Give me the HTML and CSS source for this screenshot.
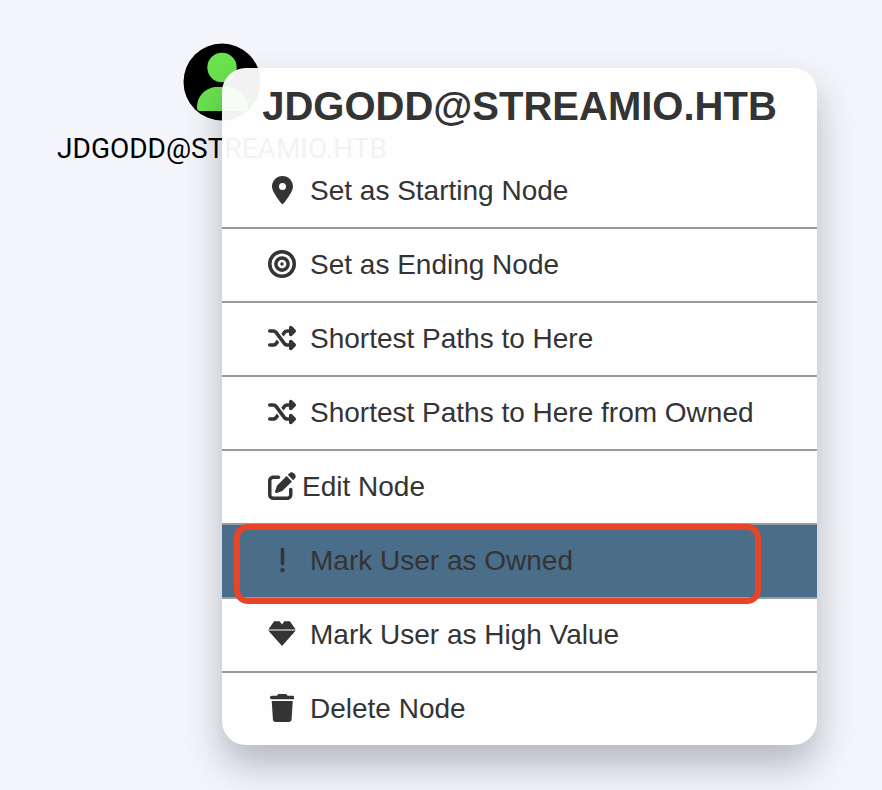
FILE: index.html
```html
<!DOCTYPE html>
<html lang="en">

<head>
    <meta charset="UTF-8">
    <meta name="viewport" content="width=device-width, initial-scale=1.0">
    <title>Node menu</title>
    <link rel="stylesheet" href="styles.css">
</head>

<body>
    <div class="node">
        <svg class="node-icon" viewBox="0 0 78 78">
            <circle cx="39" cy="39" r="38.5" fill="#000" />
            <circle cx="39" cy="24.5" r="14.7" fill="#6ae34f" />
            <path d="M14 64c0-12 10-20 20-20h10c11 0 21 8 21 20v1c0 2-1 3-3 3H17c-2 0-3-1-3-3z" fill="#6ae34f" />
        </svg>
        <div class="node-label">JDGODD@STREAMIO.HTB</div>
    </div>

    <div class="menu">
        <div class="menu-title">JDGODD@STREAMIO.HTB</div>
        <ul class="menu-list">
            <li class="menu-item">
                <span class="icon"><svg viewBox="0 0 384 512"><path d="M215.7 499.2C267 435 384 279.4 384 192C384 86 298 0 192 0S0 86 0 192c0 87.4 117 243 168.3 307.2c12.3 15.3 35.1 15.3 47.4 0zM192 128a64 64 0 1 1 0 128 64 64 0 1 1 0-128z" /></svg></span>
                Set as Starting Node
            </li>
            <li class="menu-item">
                <span class="icon"><svg viewBox="0 0 512 512"><path d="M448 256A192 192 0 1 0 64 256a192 192 0 1 0 384 0zM0 256a256 256 0 1 1 512 0A256 256 0 1 1 0 256zm256 80a80 80 0 1 0 0-160 80 80 0 1 0 0 160zm0-224a144 144 0 1 1 0 288 144 144 0 1 1 0-288zM224 256a32 32 0 1 1 64 0 32 32 0 1 1 -64 0z" /></svg></span>
                Set as Ending Node
            </li>
            <li class="menu-item">
                <span class="icon"><svg viewBox="0 0 512 512"><path d="M403.8 34.4c12-5 25.7-2.2 34.9 6.9l64 64c6 6 9.4 14.1 9.4 22.6s-3.4 16.6-9.4 22.6l-64 64c-9.2 9.2-22.9 11.9-34.9 6.9s-19.8-16.6-19.8-29.6V160H352c-10.1 0-19.6 4.7-25.6 12.8L284 229.3 244 176l31.2-41.6C293.3 110.2 321.8 96 352 96h32V64c0-12.9 7.8-24.6 19.8-29.6zM164 282.7L204 336l-31.2 41.6C154.7 401.8 126.2 416 96 416H32c-17.7 0-32-14.3-32-32s14.3-32 32-32H96c10.1 0 19.6-4.7 25.6-12.8L164 282.7zm274.6 188c-9.2 9.2-22.9 11.9-34.9 6.9s-19.8-16.6-19.8-29.6V416H352c-30.2 0-58.7-14.2-76.8-38.4L121.6 172.8c-6-8.1-15.5-12.8-25.6-12.8H32c-17.7 0-32-14.3-32-32s14.3-32 32-32H96c30.2 0 58.7 14.2 76.8 38.4L326.4 339.2c6 8.1 15.5 12.8 25.6 12.8h32V320c0-12.9 7.8-24.6 19.8-29.6s25.7-2.2 34.9 6.9l64 64c6 6 9.4 14.1 9.4 22.6s-3.4 16.6-9.4 22.6l-64 64z" /></svg></span>
                Shortest Paths to Here
            </li>
            <li class="menu-item">
                <span class="icon"><svg viewBox="0 0 512 512"><path d="M403.8 34.4c12-5 25.7-2.2 34.9 6.9l64 64c6 6 9.4 14.1 9.4 22.6s-3.4 16.6-9.4 22.6l-64 64c-9.2 9.2-22.9 11.9-34.9 6.9s-19.8-16.6-19.8-29.6V160H352c-10.1 0-19.6 4.7-25.6 12.8L284 229.3 244 176l31.2-41.6C293.3 110.2 321.8 96 352 96h32V64c0-12.9 7.8-24.6 19.8-29.6zM164 282.7L204 336l-31.2 41.6C154.7 401.8 126.2 416 96 416H32c-17.7 0-32-14.3-32-32s14.3-32 32-32H96c10.1 0 19.6-4.7 25.6-12.8L164 282.7zm274.6 188c-9.2 9.2-22.9 11.9-34.9 6.9s-19.8-16.6-19.8-29.6V416H352c-30.2 0-58.7-14.2-76.8-38.4L121.6 172.8c-6-8.1-15.5-12.8-25.6-12.8H32c-17.7 0-32-14.3-32-32s14.3-32 32-32H96c30.2 0 58.7 14.2 76.8 38.4L326.4 339.2c6 8.1 15.5 12.8 25.6 12.8h32V320c0-12.9 7.8-24.6 19.8-29.6s25.7-2.2 34.9 6.9l64 64c6 6 9.4 14.1 9.4 22.6s-3.4 16.6-9.4 22.6l-64 64z" /></svg></span>
                Shortest Paths to Here from Owned
            </li>
            <li class="menu-item">
                <span class="icon icon-edit"><svg viewBox="0 0 512 512"><path d="M471.6 21.7c-21.9-21.9-57.3-21.9-79.2 0L362.3 51.7l97.9 97.9 30.1-30.1c21.9-21.9 21.9-57.3 0-79.2L471.6 21.7zm-299.2 220c-6.1 6.1-10.8 13.6-13.5 21.9l-29.6 88.8c-2.9 8.6-.6 18.1 5.8 24.6s15.9 8.7 24.6 5.8l88.8-29.6c8.2-2.7 15.7-7.4 21.9-13.5L437.7 172.3 339.7 74.3 172.4 241.7zM96 64C43 64 0 107 0 160V416c0 53 43 96 96 96H352c53 0 96-43 96-96V320c0-17.7-14.3-32-32-32s-32 14.3-32 32v96c0 17.7-14.3 32-32 32H96c-17.7 0-32-14.3-32-32V160c0-17.7 14.3-32 32-32h96c17.7 0 32-14.3 32-32s-14.3-32-32-32H96z" /></svg></span>
                Edit Node
            </li>
            <li class="menu-item menu-item-active">
                <span class="icon"><svg viewBox="0 0 128 512"><path d="M96 64c0-17.7-14.3-32-32-32S32 46.3 32 64V320c0 17.7 14.3 32 32 32s32-14.3 32-32V64zM64 480a40 40 0 1 0 0-80 40 40 0 1 0 0 80z" /></svg></span>
                Mark User as Owned
            </li>
            <li class="menu-item">
                <span class="icon"><svg viewBox="0 0 512 512"><path d="M112 24h100l44 58 44-58h100l106 150H6zM4 192h504L256 476z" /></svg></span>
                Mark User as High Value
            </li>
            <li class="menu-item">
                <span class="icon"><svg viewBox="0 0 448 512"><path d="M135.2 17.7L128 32H32C14.3 32 0 46.3 0 64S14.3 96 32 96H416c17.7 0 32-14.3 32-32s-14.3-32-32-32H320l-7.2-14.3C307.4 6.8 296.3 0 284.2 0H163.8c-12.1 0-23.2 6.8-28.6 17.7zM416 128H32L53.2 467c1.6 25.3 22.6 45 47.9 45H346.9c25.3 0 46.3-19.7 47.9-45L416 128z" /></svg></span>
                Delete Node
            </li>
        </ul>
    </div>
    <div class="highlight"></div>
</body>

</html>
```

FILE: styles.css
```css
body {
    font-family: "Liberation Sans", Arial, sans-serif;
    margin: 0;
    height: 790px;
    overflow: hidden;
    background-color: #f3f5fa;
    color: #2a2a2a;
}

/* node on the graph canvas, sits behind the menu */
.node {
    position: absolute;
    left: 57px;
    top: 43px;
    width: 330px;
    display: flex;
    flex-direction: column;
    align-items: center;
}

.node-icon {
    display: block;
    width: 78px;
    height: 78px;
}

.node-label {
    margin-top: 10px;
    font-family: Roboto, sans-serif;
    font-size: 28px;
    line-height: 36px;
    color: #000;
    white-space: nowrap;
}

.menu {
    position: absolute;
    left: 222px;
    top: 68px;
    width: 595px;
    height: 677px;
    background: #fff;
    opacity: 0.95;
    border-radius: 24px;
    box-shadow: 0 20px 36px rgba(30, 40, 50, 0.3);
}

.menu-title {
    height: 76px;
    padding-top: 11px;
    font-size: 40px;
    font-weight: bold;
    line-height: 54px;
    text-align: center;
    white-space: nowrap;
    box-sizing: border-box;
}

.menu-list {
    list-style: none;
    margin: 11px 0 0;
    padding: 0;
}

.menu-item {
    display: flex;
    align-items: center;
    height: 74px;
    padding-left: 46px;
    font-size: 28px;
    box-sizing: border-box;
    border-bottom: 2px solid #94979b;
}

.menu-item:last-child {
    height: 72px;
    border-bottom: none;
}

.menu-item-active {
    background: #416684;
}

.icon {
    display: flex;
    justify-content: center;
    width: 28px;
    margin-right: 14px;
    margin-top: -3px;
    flex: none;
}

.icon svg {
    display: block;
    height: 28px;
    fill: #2a2a2a;
}

.icon-edit {
    margin-right: 6px;
}

.highlight {
    position: absolute;
    left: 234px;
    top: 524px;
    width: 527px;
    height: 80px;
    box-sizing: border-box;
    border: 6px solid #e84427;
    border-radius: 14px;
}
```
